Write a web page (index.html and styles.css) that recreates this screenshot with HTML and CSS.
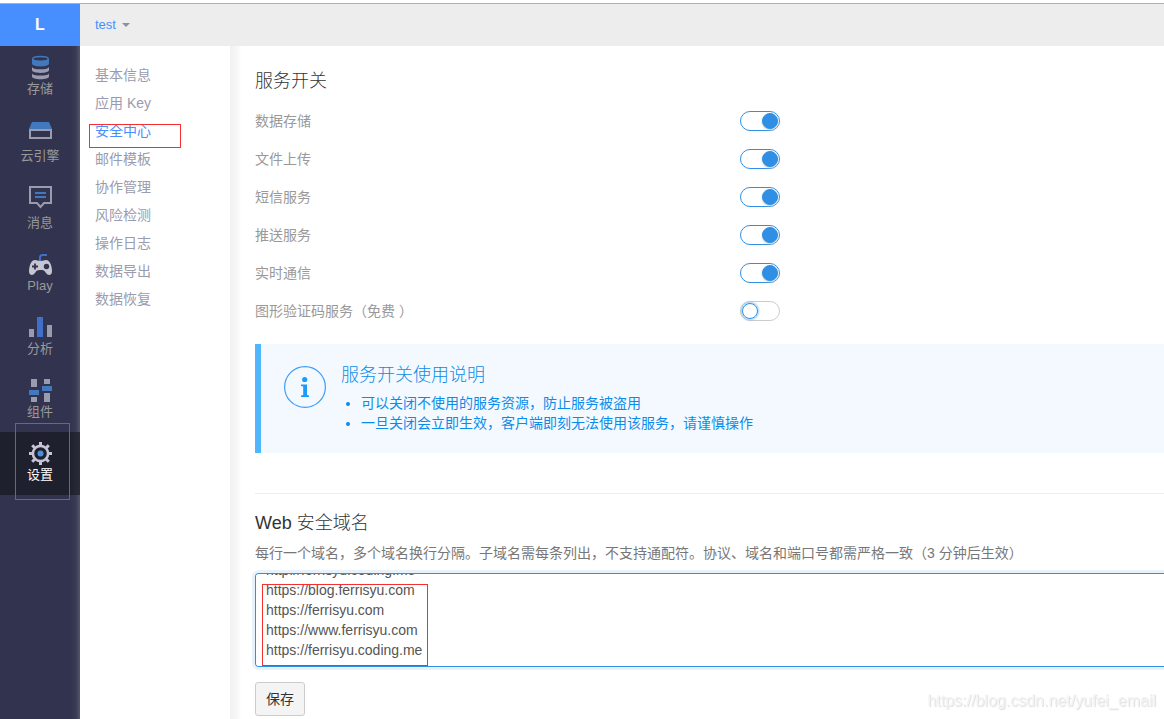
FILE: index.html
```html
<!DOCTYPE html>
<html lang="zh-CN">
<head>
<meta charset="utf-8">
<title>安全中心</title>
<link rel="stylesheet" href="styles.css">
</head>
<body>
<div class="app">
  <aside class="sidebar">
    <a class="logo" href="#">L</a>
    <nav class="nav">
      <a class="nav-item spaced" href="#">
        <svg class="nav-icon" viewBox="0 0 24 28">
          <path fill="#9b9bb0" d="M4 21c0 2 3.600 2.600 8.500 2.600S21 23 21 21v3.500c0 1.700-3.600 2.700-8.500 2.700S4 26.200 4 24.500zM4 14.500c0 2 3.600 2.800 8.500 2.800s8.500-.8 8.500-2.800V18c0 1.800-3.600 2.900-8.500 2.900S4 19.800 4 18z"/>
          <path fill="#4178be" d="M4 7v4.500c0 1.800 3.600 2.900 8.500 2.900s8.500-1.100 8.500-2.900V7z"/>
          <ellipse cx="12.500" cy="6.800" rx="7.800" ry="2.300" fill="#32344f" stroke="#4178be" stroke-width="1.400"/>
        </svg>
        <span>存储</span>
      </a>
      <a class="nav-item spaced" href="#">
        <svg class="nav-icon" viewBox="0 0 24 28">
          <path fill="#4178be" d="M4 3h17l3 7H1z"/>
          <path fill="none" stroke="#9b9bb0" stroke-width="2" d="M2 11h21v8H2z"/>
        </svg>
        <span>云引擎</span>
      </a>
      <a class="nav-item" href="#">
        <svg class="nav-icon" viewBox="0 0 24 28">
          <path fill="none" stroke="#9b9bb0" stroke-width="2" d="M2 1h21v16h-7l-3.500 4L9 17H2z"/>
          <path stroke="#4178be" stroke-width="2" d="M7 7h11M7 11h11"/>
        </svg>
        <span>消息</span>
      </a>
      <a class="nav-item" href="#">
        <svg class="nav-icon" viewBox="0 0 24 28">
          <path fill="none" stroke="#3f6fc9" stroke-width="2" d="M12 12V8.500C12 7 13 6 14.500 6H19"/>
          <path fill="#c6c5d2" d="M7 11c2 0 2.500 1 5.500 1s3.500-1 5.500-1c4 0 6 6 6 11.500 0 4-4 4.500-6 1.500-1.500-2.300-2-3-5.500-3S8.500 21.700 7 24c-2 3-6 2.500-6-1.500C1 17 3 11 7 11z"/>
          <path stroke="#32344f" stroke-width="1.800" d="M4 17.500h6M7 14.500v6"/>
          <circle cx="18.500" cy="17.500" r="2.700" fill="#32344f"/>
        </svg>
        <span>Play</span>
      </a>
      <a class="nav-item" href="#">
        <svg class="nav-icon" viewBox="0 0 24 28">
          <path fill="#9b9bb0" d="M1 17h5v8H1zM19 13h5v12h-5z"/>
          <path fill="#3f6fc9" d="M9 5h6v20H9z"/>
        </svg>
        <span>分析</span>
      </a>
      <a class="nav-item" href="#">
        <svg class="nav-icon" viewBox="0 0 24 28">
          <path fill="#9b9bb0" d="M3 4h6v8H3zM3 22h6v5H3zM16 4h6v5h-6zM16 18h6v9h-6z"/>
          <path fill="#4178be" d="M1 15h10v5H1zM14 11h10v5H14z"/>
        </svg>
        <span>组件</span>
      </a>
      <a class="nav-item active" href="#" aria-current="page">
        <svg class="nav-icon" viewBox="0 0 24 28">
          <g transform="translate(12.500 15.500)">
            <circle r="7.600" fill="none" stroke="#c6c5d6" stroke-width="2.600"/>
            <path stroke="#c6c5d6" stroke-width="3" d="M0-11.500V-8M0 8v3.500M-11.500 0H-8M8 0h3.500M-8.300-8.300l2.500 2.500M5.800 5.800l2.500 2.500M-8.300 8.300l2.500-2.500M5.800-5.800l2.500-2.500"/>
            <circle r="3" fill="#4a90e2"/>
          </g>
        </svg>
        <span>设置</span>
        <i class="mark mark-nav"></i>
      </a>
    </nav>
  </aside>

  <div class="page">
    <header class="topbar">
      <button class="app-switch" type="button">test <span class="caret"></span></button>
    </header>
    <div class="body">
      <nav class="subnav">
        <a href="#">基本信息</a>
        <a href="#">应用 Key</a>
        <a class="current" href="#">安全中心<i class="mark mark-sub"></i></a>
        <a href="#">邮件模板</a>
        <a href="#">协作管理</a>
        <a href="#">风险检测</a>
        <a href="#">操作日志</a>
        <a href="#">数据导出</a>
        <a href="#">数据恢复</a>
      </nav>
      <main class="main">
        <h2>服务开关</h2>
        <div class="switches">
          <label class="row">数据存储<input class="switch" type="checkbox" checked></label>
          <label class="row">文件上传<input class="switch" type="checkbox" checked></label>
          <label class="row">短信服务<input class="switch" type="checkbox" checked></label>
          <label class="row">推送服务<input class="switch" type="checkbox" checked></label>
          <label class="row">实时通信<input class="switch" type="checkbox" checked></label>
          <label class="row">图形验证码服务（免费 ）<input class="switch" type="checkbox"></label>
        </div>
        <section class="notice">
          <svg class="info" viewBox="0 0 42 42">
            <circle cx="21" cy="21" r="20.400" fill="none" stroke="#3d9cf5" stroke-width="1.200"/>
            <circle cx="20.700" cy="13.500" r="2.600" fill="#1c9bf8"/>
            <path fill="#1c9bf8" d="M17 18.500h6V29l2 .6V31h-8v-1.400l2.200-.6v-8.500L17 20z"/>
          </svg>
          <div>
            <h3>服务开关使用说明</h3>
            <ul>
              <li>可以关闭不使用的服务资源，防止服务被盗用</li>
              <li>一旦关闭会立即生效，客户端即刻无法使用该服务，请谨慎操作</li>
            </ul>
          </div>
        </section>
        <hr>
        <h2><label for="domains">Web 安全域名</label></h2>
        <p class="hint">每行一个域名，多个域名换行分隔。子域名需每条列出，不支持通配符。协议、域名和端口号都需严格一致（3 分钟后生效）</p>
        <div class="field">
          <textarea id="domains" spellcheck="false">http://ferrisyu.coding.me
https://blog.ferrisyu.com
https://ferrisyu.com
https://www.ferrisyu.com
https://ferrisyu.coding.me</textarea>
          <i class="mark mark-field"></i>
        </div>
        <button class="save" type="button">保存</button>
      </main>
    </div>
  </div>
</div>
<div class="watermark">https://blog.csdn.net/yufei_email</div>
<script src="main.js"></script>
</body>
</html>
```
FILE: styles.css
```css
*, *::before { box-sizing: border-box; }

body {
  margin: 0;
  background: #fff;
  color: #333;
  font: 14px/20px "Liberation Sans", "Noto Sans CJK SC", sans-serif;
}

a { text-decoration: none; }
h2, h3, p, ul { margin: 0; padding: 0; }
h2, h3 { font-size: 18px; font-weight: 300; }

.app {
  display: flex;
  min-height: 100vh;
  padding-top: 3px;
  overflow: hidden;
}

.sidebar {
  flex: 0 0 80px;
  background: linear-gradient(to right, #32344f 70px, #393b54 76px, #55566c 80px);
  border-top: 1px solid #b0b0b0;
}

.logo {
  display: block;
  height: 42px;
  background: #478fff;
  color: #fff;
  font-size: 16px;
  font-weight: 700;
  line-height: 42px;
  text-align: center;
}

.nav-item {
  position: relative;
  display: flex;
  flex-direction: column;
  align-items: center;
  padding: 6px 0 11px;
  color: #999;
  font-size: 13px;
  line-height: 18px;
}

.nav-item.spaced { margin-bottom: 4px; }
.nav-item.active {
  background: linear-gradient(to right, #1f202e 70px, #2b2c3a 80px);
  color: #fff;
}
.nav-icon { width: 24px; height: 28px; }

.page { flex: 1; min-width: 0; display: flex; flex-direction: column; }

.topbar {
  height: 43px;
  padding: 0 15px;
  display: flex;
  align-items: center;
  background: #ededed;
  border-top: 1px solid #b0b0b0;
}

.app-switch {
  display: flex;
  align-items: center;
  gap: 6px;
  padding: 0;
  border: 0;
  background: none;
  color: #478fff;
  font: 13px/20px "Liberation Sans", sans-serif;
}

.caret {
  border: 4px solid transparent;
  border-top-color: #8c8ea3;
  border-bottom: 0;
}

.body { flex: 1; display: flex; }

.subnav {
  flex: 0 0 150px;
  display: flex;
  flex-direction: column;
  padding: 15px 15px 0;
}

.subnav a {
  position: relative;
  color: #9a9bae;
  line-height: 28px;
}
.subnav .current { color: #478fff; }

.main {
  flex: 1;
  min-width: 0;
  padding: 20px 0 3px 25px;
  background: linear-gradient(to right, #f1f1f1, #f8f8f8 8px, #fff 11px);
}

.main h2 { line-height: 30px; }

.switches { max-width: 525px; margin: 6px 0 14px; }

.row {
  display: flex;
  align-items: center;
  justify-content: space-between;
  height: 38px;
  color: #999;
}

.switch {
  appearance: none;
  display: flex;
  width: 40px;
  height: 20px;
  margin: 0;
  padding: 1px;
  border: 1px solid #ccc;
  border-radius: 10px;
  background: #fff;
}

.switch::before {
  content: "";
  width: 16px;
  height: 16px;
  border: 1px solid #2f8fe5;
  border-radius: 50%;
  box-shadow: 0 0 3px #2f8fe5;
}

.switch:checked { border-color: #2f8fe5; justify-content: flex-end; }
.switch:checked::before {
  background: #2f8fe5;
  box-shadow: 0 1px 2px #ccc;
}

.notice {
  display: flex;
  gap: 15px;
  padding: 20px 23px;
  border-left: 6px solid #50b7ff;
  background: #f4f9ff;
  color: #0b8ce9;
}

.notice h3 { margin-bottom: 7px; line-height: 22px; }
.notice ul { padding-left: 20px; }
.info { flex: none; width: 42px; height: 42px; margin-top: 2px; }

hr {
  margin: 40px 0 14px;
  border: 0;
  border-top: 1px solid #eee;
}

.hint { margin: 5px 0 10px; color: #777; }

.field { position: relative; }

textarea {
  display: block;
  width: 100%;
  height: 94px;
  padding: 6px 10px;
  border: 1px solid #2f8fe5;
  border-right: 0;
  border-radius: 4px 0 0 4px;
  outline: 0;
  background: #fff;
  box-shadow: 0 0 0 3px #e8f2fc;
  color: #555;
  font: inherit;
  resize: none;
  scrollbar-width: none;
}

.save {
  display: block;
  height: 34px;
  margin-top: 15px;
  padding: 0 10px;
  border: 1px solid #ccc;
  border-radius: 3px;
  background: #f4f4f4;
  color: #333;
  font: inherit;
}

.mark {
  position: absolute;
  border: 1px solid #f5302e;
  pointer-events: none;
}
.mark-nav { left: 15px; top: -9px; width: 55px; height: 77px; }
.mark-sub { left: -6px; top: 7px; width: 92px; height: 24px; }
.mark-field { left: 7px; top: 11px; width: 166px; height: 82px; }

.watermark {
  position: fixed;
  right: 8px;
  bottom: 8px;
  color: #f3f3f3;
  font-size: 16px;
  text-shadow: 1px 1px 1px #ddd;
  pointer-events: none;
}
```
FILE: main.js
```js
const domains = document.getElementById("domains");
domains.scrollTop = domains.scrollHeight;
```
